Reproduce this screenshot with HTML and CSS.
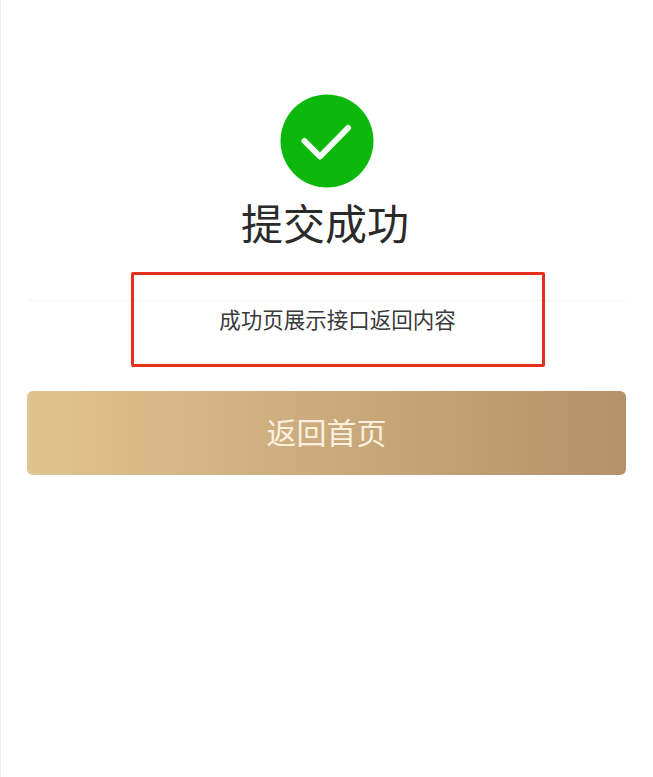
FILE: index.html
```html
<!DOCTYPE html>
<html lang="zh-CN">
<head>
    <meta charset="UTF-8">
    <meta name="viewport" content="width=device-width, initial-scale=1.0">
    <title>提交成功</title>
    <link rel="stylesheet" href="styles.css">
</head>
<body>
    <div class="page">
        <div class="result-icon">
            <svg width="94" height="94" viewBox="0 0 94 94">
                <circle cx="47" cy="47" r="46.500" fill="#0cb80c"/>
                <path d="M24.500 47 L40 62.500 L68 34" fill="none" stroke="#f4fbf4" stroke-width="6" stroke-linecap="round" stroke-linejoin="round"/>
            </svg>
        </div>
        <h1 class="result-title">提交成功</h1>
        <div class="result-content">
            <p>成功页展示接口返回内容</p>
            <div class="mark-box"></div>
        </div>
        <button class="btn-back">返回首页</button>
    </div>
</body>
</html>
```

FILE: styles.css
```css
html, body {
    margin: 0;
    padding: 0;
    background: #fff;
}
.page {
    box-sizing: border-box;
    height: 777px;
    padding: 94px 27px 0 26px;
    border-left: 1px solid #ececec;
    font-family: "Liberation Sans", "Noto Sans CJK SC", sans-serif;
    overflow: hidden;
}
.result-icon {
    display: flex;
    justify-content: center;
    height: 94px;
}
.result-icon svg {
    display: block;
}
.result-title {
    margin: 7px 0 0;
    padding-right: 3px;
    height: 61px;
    line-height: 61px;
    font-size: 42px;
    font-weight: 400;
    color: #2a2a2a;
    text-align: center;
}
.result-content {
    position: relative;
    margin-top: 44px;
    height: 90px;
    border-top: 1px solid #f5f5f5;
}
.result-content p {
    margin: 0;
    padding: 4px 0 0 22px;
    line-height: 32px;
    font-size: 21.500px;
    color: #3a3a3a;
    text-align: center;
}
.mark-box {
    position: absolute;
    left: 104px;
    top: -29px;
    width: 408px;
    height: 89px;
    border: 3px solid #e4301f;
    border-radius: 2px;
}
.btn-back {
    display: block;
    width: 599px;
    height: 84px;
    padding: 0 0 5px;
    border: none;
    border-radius: 6px;
    background: linear-gradient(90deg, #e0c48f, #b59169);
    color: #faf0e0;
    font-family: inherit;
    font-size: 30px;
}
```
